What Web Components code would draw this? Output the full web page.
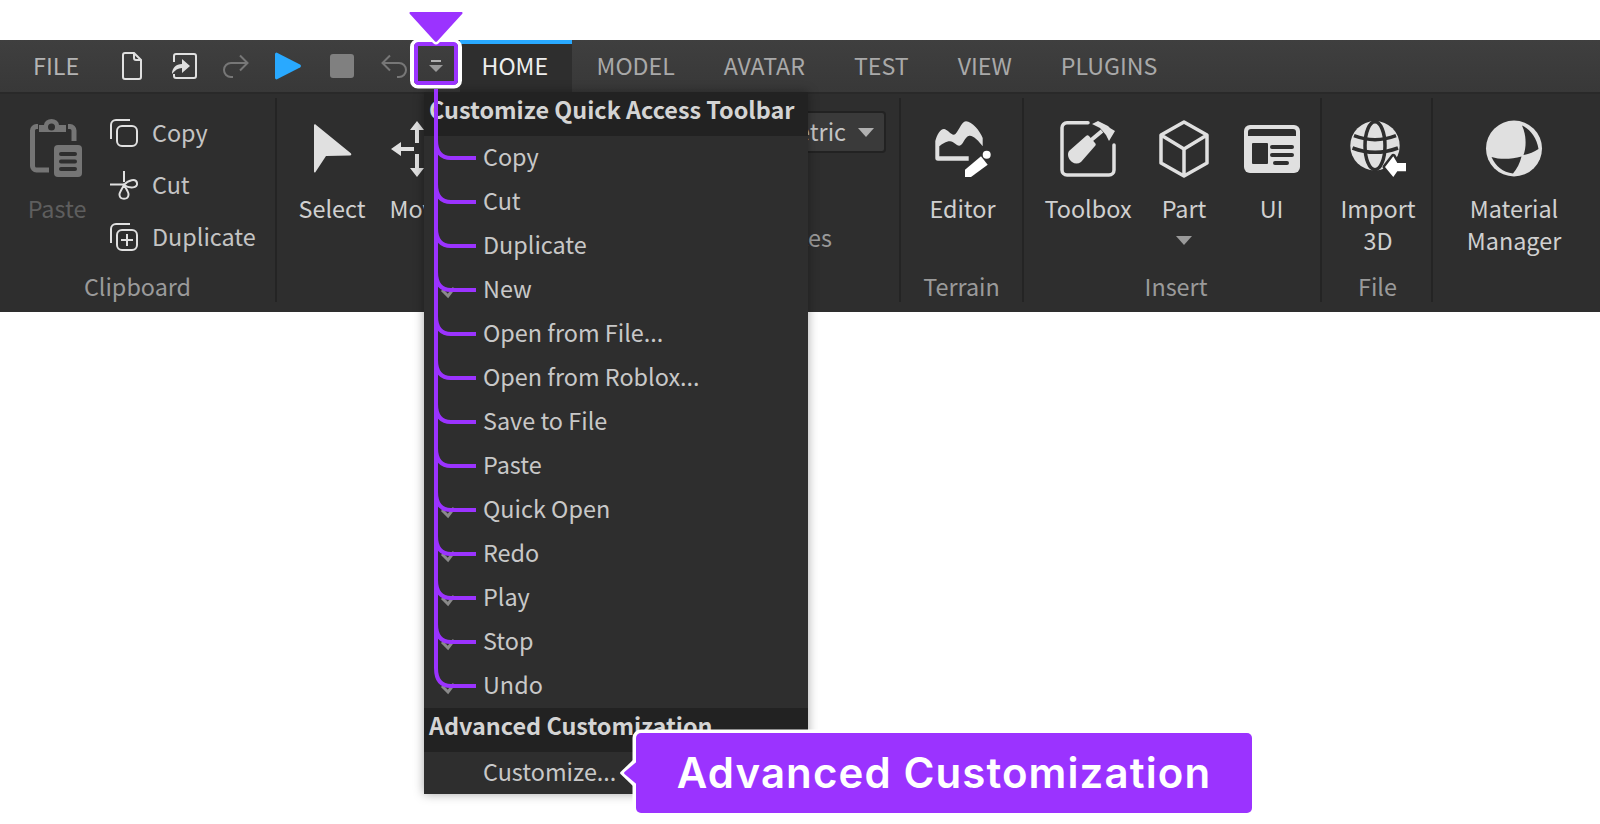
<!DOCTYPE html>
<html>
<head>
<meta charset="utf-8">
<title>Customize Quick Access Toolbar</title>
<style>
  html, body { margin: 0; background: #fff; }
  body { font-family: "Noto Sans CJK SC", "Noto Sans", sans-serif; }
</style>
</head>
<body>
<rs-app></rs-app>

<script>
// icon drawings, coordinates are the size of the box they sit in
const ICONS = {
  doc: [20, 28, `<path d="M3 1h9l7 7v17a2 2 0 0 1-2 2H3a2 2 0 0 1-2-2V3a2 2 0 0 1 2-2z" fill="none" stroke="#e0e0e0" stroke-width="2"/><path d="M12 1v5a2 2 0 0 0 2 2h5" fill="none" stroke="#e0e0e0" stroke-width="2"/>`],
  open: [26, 26, `<path d="M3 9V3a2 2 0 0 1 2-2h18a2 2 0 0 1 2 2v20a2 2 0 0 1-2 2H5a2 2 0 0 1-2-2v-2" fill="none" stroke="#e0e0e0" stroke-width="2"/><path d="M1 21c0-6 4-10 10-10V6l8 7-8 7v-5c-4 0-7 2-10 6z" fill="#e0e0e0"/>`],
  redo: [26, 24, `<path d="M24 9H8a6.500 6.500 0 0 0 0 14h2M17 1.500 24.500 9 17 16.500" fill="none" stroke="#777" stroke-width="2"/>`],
  undo: [26, 24, `<path d="M2 9h16a6.500 6.500 0 0 1 0 14h-2M9 1.500 1.500 9 9 16.500" fill="none" stroke="#777" stroke-width="2"/>`],
  play: [28, 30, `<path d="M2.500 1.500 26 13.500a1.700 1.700 0 0 1 0 3L2.500 28.500A1.600 1.600 0 0 1 1 27V3a1.600 1.600 0 0 1 1.500-1.500z" fill="#29a9ff"/>`],
  stop: [24, 24, `<rect width="24" height="24" rx="3" fill="#808080"/>`],
  drop: [14, 12, `<path d="M2 0h10v2H2z" fill="#b0b0b0"/><path d="M0 5h14l-7 7z" fill="#999"/>`],
  paste: [54, 56, `<path d="M8 5.500H6.500a4 4 0 0 0-4 4V45a4 4 0 0 0 4 4H19M38 5.500h2a4 4 0 0 1 4 4V20" fill="none" stroke="#757575" stroke-width="5"/><path d="M9 11V4h5a7.500 6 0 0 1 15 0h7v7z" fill="#757575"/><circle cx="21.500" cy="6" r="3.500" fill="#2e2e2e"/><rect x="24" y="24" width="28" height="32" rx="4" fill="#757575"/><path d="M31 33h14M31 40.500h14M31 48h14" stroke="#2e2e2e" stroke-width="4" stroke-linecap="round"/>`],
  copy: [28, 28, `<rect x="7" y="7" width="20" height="20" rx="5" fill="none" stroke="#e0e0e0" stroke-width="2"/><path d="M1 20V6a5 5 0 0 1 5-5h14" fill="none" stroke="#e0e0e0" stroke-width="2"/>`],
  cut: [28, 28, `<path d="M14 0v11M0 13.500h14" fill="none" stroke="#e0e0e0" stroke-width="2"/><path d="M14 14C18 9 26 7 27 12 28 17 20 18 14 14z" fill="none" stroke="#e0e0e0" stroke-width="2"/><path d="M14 14C12 18 9 22 9.500 24 10 29 18 29 18.500 24 19 21 16 18 14 14z" fill="none" stroke="#e0e0e0" stroke-width="2"/>`],
  dup: [28, 28, `<rect x="7" y="7" width="20" height="20" rx="5" fill="none" stroke="#e0e0e0" stroke-width="2"/><path d="M1 20V6a5 5 0 0 1 5-5h14" fill="none" stroke="#e0e0e0" stroke-width="2"/><path d="M17 11v12M11 17h12" stroke="#e0e0e0" stroke-width="2"/>`],
  select: [40, 50, `<path d="M2 1.500c0-1 1-1.500 1.800-.8l35 28.500c1 .8.500 2.300-.8 2.300L14 32 3.500 48c-.6.900-1.500.5-1.500-.5z" fill="#e0e0e0"/>`],
  move: [56, 56, `<path d="M26 0l7 9h-5v13h-4V9h-5zM26 56l-7-9h5V33h4v14h5zM0 28l10-7v5h13v4H10v5z" fill="#e0e0e0"/>`],
  editor: [58, 57, `<path d="M1.300 20C3 14 6 8 10 8 13 8 17 14 20 13.700 24 13 27 .3 32 .3 38 .3 46 10 48.700 17V25.300C45 20 39 14 35.300 14.700 31 15 29 24.700 25.300 24.700 22 24.700 20 20.300 16 20.300 12 20.300 8 23 5.300 25.300V35.300H34.700V39.700H4A2.700 2.700 0 0 1 1.300 37z" fill="#e0e0e0"/><path d="M31 56v-7.300L47 35.300 53.700 43.700 37 56z" fill="#fff"/><circle cx="52.700" cy="33.800" r="4" fill="#fff"/>`],
  toolbox: [56, 56, `<path d="M28 1.800H7a5 5 0 0 0-5 5V49a5 5 0 0 0 5 5h42a5 5 0 0 0 5-5V24" fill="none" stroke="#e0e0e0" stroke-width="3.500" stroke-linecap="round"/><path d="M9 30 26 15c1-1 2-1 3 0l6 7c1 1 1 2 0 3L21 41c-3 2-6 2-9 0-4-3-5-8-3-11z" fill="#e0e0e0"/><path d="M30 20l12-10" stroke="#e0e0e0" stroke-width="4"/><path d="M32 3l6-3 10 5 2 2 5 3-6 10-3-6-6-7z" fill="#e0e0e0"/>`],
  part: [50, 58, `<path d="M25 2 48 15v28L25 56 2 43V15zM2 15l23 14 23-14M25 29v27" fill="none" stroke="#e0e0e0" stroke-width="3.500" stroke-linejoin="round"/>`],
  ui: [56, 48, `<rect width="56" height="48" rx="6" fill="#e0e0e0"/><path d="M4 11V7a3 3 0 0 1 3-3h42a3 3 0 0 1 3 3v4z" fill="#2e2e2e"/><rect x="8" y="18" width="16" height="21" rx="1" fill="#2e2e2e"/><path d="M28 22h20M28 30h20M31 38h12" stroke="#2e2e2e" stroke-width="4" stroke-linecap="round"/>`],
  import: [58, 57, `<circle cx="26" cy="24.700" r="24.700" fill="#e0e0e0"/><ellipse cx="26" cy="24.700" rx="10" ry="24" fill="none" stroke="#2e2e2e" stroke-width="3.500"/><path d="M5 14.700Q26 22.700 47 14.700M3.500 27Q26 35.600 49 27" fill="none" stroke="#2e2e2e" stroke-width="3.500"/><path d="M36 46 44.300 35.300 48.300 42H57V50.300H48.300L44.300 56z" fill="#fff" stroke="#2e2e2e" stroke-width="5" paint-order="stroke" stroke-linejoin="round"/>`],
  material: [56, 56, `<circle cx="28" cy="27.500" r="28" fill="#e0e0e0"/><path d="M36 4.500C44 8 51 17 52.500 28 48 31 43 33 37.500 34 40.500 26 40.500 14 36 4.500z" fill="#2e2e2e"/><path d="M5.500 36C15 39 26 38 35.500 35.500 34 42 31 48 27 52.500 17 51.500 9.500 45 5.500 36z" fill="#2e2e2e"/>`],
  check: [16, 12, `<path d="M2 4l6 6 6-8" fill="none" stroke="#8a8a8a" stroke-width="3"/>`],
};

class RsIcon extends HTMLElement {
  connectedCallback() {
    const [w, h, body] = ICONS[this.getAttribute('name')];
    this.attachShadow({ mode: 'open' }).innerHTML = `
      <style>:host { display: block; line-height: 0; } svg { display: block; overflow: visible; }</style>
      <svg width="${w}" height="${h}" viewBox="0 0 ${w} ${h}">${body}</svg>`;
  }
}

// quick access cell in the title bar
class RsQuick extends HTMLElement {
  connectedCallback() {
    this.attachShadow({ mode: 'open' }).innerHTML = `
      <style>
        :host { display: flex; align-items: center; justify-content: center; flex: none; width: 52px; height: 100%; }
      </style>
      <slot></slot>`;
  }
}

class RsTab extends HTMLElement {
  connectedCallback() {
    this.attachShadow({ mode: 'open' }).innerHTML = `
      <style>
        :host {
          display: flex; align-items: center; box-sizing: border-box; height: 52px; padding: 0 24.500px 2px;
          font-size: 23.200px; color: #a9a9a9; white-space: nowrap;
        }
        :host([active]) {
          background: #2e2e2e; color: #eee; border-top: 4px solid #29a9ff; padding: 0 24px 6px 21.500px;
        }
      </style>
      <slot></slot>`;
  }
}

class RsTitlebar extends HTMLElement {
  connectedCallback() {
    this.attachShadow({ mode: 'open' }).innerHTML = `
      <style>
        :host {
          display: flex; align-items: stretch; height: 52px; box-sizing: border-box;
          background: linear-gradient(#3f3f3f, #383838);
          font-size: 23.400px; color: #b4b4b4;
        }
        .file { display: flex; align-items: center; width: 106px; padding: 0 0 2px 33px; box-sizing: border-box; }
        .quick { display: flex; flex: none; width: 354px; }
        .tabs { display: flex; }
      </style>
      <div class="file">FILE</div>
      <div class="quick"><slot name="quick"></slot></div>
      <div class="tabs"><slot></slot></div>`;
  }
}

// one ribbon group: its content, and its caption along the bottom
class RsGroup extends HTMLElement {
  connectedCallback() {
    this.attachShadow({ mode: 'open' }).innerHTML = `
      <style>
        :host {
          display: flex; flex-direction: column; box-sizing: border-box; height: 204px;
          border-right: 2px solid #242424;
        }
        :host([last]) { border-right: 0; }
        .body { flex: 1; display: flex; min-height: 0; }
        .cap { height: 28px; line-height: 24px; text-align: center; font-size: 23.400px; color: #9a9a9a; }
      </style>
      <div class="body"><slot></slot></div>
      <div class="cap"><slot name="cap"></slot></div>`;
  }
}

class RsButton extends HTMLElement {
  connectedCallback() {
    this.attachShadow({ mode: 'open' }).innerHTML = `
      <style>
        :host {
          display: flex; flex-direction: column; align-items: center; flex: none;
          padding-top: 22px; box-sizing: border-box;
          font-size: 23.400px; line-height: 32px; color: #d0d0d0; text-align: center;
        }
        :host([dim]) { color: #5e5e5e; }
        .ic { height: 58px; display: flex; align-items: center; justify-content: center; margin-bottom: 14px; }
      </style>
      <div class="ic"><slot name="icon"></slot></div>
      <slot></slot>`;
  }
}

class RsRow extends HTMLElement {
  connectedCallback() {
    this.attachShadow({ mode: 'open' }).innerHTML = `
      <style>
        :host {
          display: flex; align-items: center; gap: 14px; height: 52px;
          font-size: 23.400px; color: #c4c4c4;
        }
        span { padding-bottom: 2px; }
      </style>
      <slot name="icon"></slot><span><slot></slot></span>`;
  }
}

class RsRibbon extends HTMLElement {
  connectedCallback() {
    this.attachShadow({ mode: 'open' }).innerHTML = `
      <style>
        :host {
          display: flex; box-sizing: border-box; height: 220px; padding: 4px 0 10px;
          background: #2e2e2e; border-top: 2px solid #292929;
        }
      </style>
      <slot></slot>`;
  }
}

class RsDropdown extends HTMLElement {
  connectedCallback() {
    this.attachShadow({ mode: 'open' }).innerHTML = `
      <style>
        :host {
          display: flex; align-items: center; justify-content: flex-end; gap: 12px; box-sizing: border-box;
          width: 200px; height: 42px; padding-right: 10px;
          background: #3a3a3a; border: 2px solid #222; border-radius: 4px;
          font-size: 23.400px; color: #c4c4c4;
        }
        span { padding-bottom: 3px; }
        i { border: 8px solid transparent; border-top: 9px solid #b0b0b0; border-bottom: 0; }
      </style>
      <span><slot></slot></span><i></i>`;
  }
}

// the dropdown laid over the ribbon
class RsMenu extends HTMLElement {
  connectedCallback() {
    this.attachShadow({ mode: 'open' }).innerHTML = `
      <style>
        :host {
          position: absolute; left: 424px; top: 92px; width: 384px; height: 702px;
          display: flex; flex-direction: column;
          background: #2e2e2e; box-shadow: 0 0 10px rgba(0,0,0,.35);
        }
      </style>
      <slot></slot>`;
  }
}

class RsMenuHead extends HTMLElement {
  connectedCallback() {
    this.attachShadow({ mode: 'open' }).innerHTML = `
      <style>
        :host {
          display: flex; align-items: center; flex: none; box-sizing: border-box; height: 44px; padding: 0 0 10px 5px;
          background: #222; color: #d4d4d4; font-size: 23.400px; font-weight: 700; white-space: nowrap;
        }
      </style>
      <slot></slot>`;
  }
}

class RsMenuItem extends HTMLElement {
  connectedCallback() {
    const tick = this.hasAttribute('checked') ? '<rs-icon name="check"></rs-icon>' : '';
    this.attachShadow({ mode: 'open' }).innerHTML = `
      <style>
        :host {
          display: flex; align-items: center; flex: none; height: 44px;
          font-size: 23.400px; color: #c8c8c8; white-space: nowrap;
        }
        .mark { flex: none; width: 59px; box-sizing: border-box; padding: 4px 0 0 16px; }
        span { padding-bottom: 4px; }
      </style>
      <div class="mark">${tick}</div>
      <span><slot></slot></span>`;
  }
}

// purple bracket running from the highlighted button down the menu
class RsGuide extends HTMLElement {
  connectedCallback() {
    let d = '';
    for (let i = 0; i < 13; i++) {
      const y = 69 + i * 44;
      d += `M2 ${y - 18}C2 ${y - 6} 7 ${y} 17 ${y}H42`;
    }
    this.attachShadow({ mode: 'open' }).innerHTML = `
      <style>
        :host { position: absolute; left: 434px; top: 89px; width: 43px; height: 600px; }
        svg { display: block; overflow: visible; }
      </style>
      <svg width="43" height="600" viewBox="0 0 43 600" fill="none" stroke="#9b33ff" stroke-width="4">
        <path d="M2 0V579"/><path d="${d}"/>
      </svg>`;
  }
}

// white edged marker on the dropdown button, arrow above it
class RsMarker extends HTMLElement {
  connectedCallback() {
    this.attachShadow({ mode: 'open' }).innerHTML = `
      <style>
        :host { position: absolute; left: 405px; top: 8px; width: 62px; height: 84px; }
        svg { display: block; overflow: visible; }
      </style>
      <svg width="62" height="84" viewBox="0 0 62 84">
        <rect x="7" y="33" width="48" height="45.500" rx="6" fill="none" stroke="#fff" stroke-width="4"/>
        <rect x="11" y="36" width="40" height="39" rx="2.500" fill="none" stroke="#9b33ff" stroke-width="4"/>
        <path d="M5.500 4h51a1 1 0 0 1 .8 1.700L32 33.500a1.500 1.500 0 0 1-2 0L4.700 5.700A1 1 0 0 1 5.500 4z" fill="#9b33ff" stroke="#fff" stroke-width="5" paint-order="stroke"/>
      </svg>`;
  }
}

class RsCallout extends HTMLElement {
  connectedCallback() {
    this.attachShadow({ mode: 'open' }).innerHTML = `
      <style>
        :host {
          position: absolute; left: 636px; top: 733px; width: 616px; height: 80px;
          display: flex; align-items: center; justify-content: center; box-sizing: border-box; padding-bottom: 2px;
          background: #9b33ff; border-radius: 5px; box-shadow: 0 0 0 3.500px #fff;
          color: #fff; font-family: Inter, "Liberation Sans", sans-serif; font-size: 42px; font-weight: 600;
          letter-spacing: 1.100px; white-space: nowrap;
        }
        svg { position: absolute; left: -17px; top: 24px; overflow: visible; }
      </style>
      <svg width="18" height="32" viewBox="0 0 18 32">
        <path d="M14 3 1.500 15a1.500 1.500 0 0 0 0 2L14 29z" fill="#fff"/>
        <path d="M18 4.500 5.500 15a1.500 1.500 0 0 0 0 2L18 27.500z" fill="#9b33ff"/>
      </svg>
      <slot></slot>`;
  }
}

class RsApp extends HTMLElement {
  connectedCallback() {
    this.attachShadow({ mode: 'open' }).innerHTML = `
      <style>
        :host {
          display: block; position: relative; box-sizing: border-box; width: 1600px; height: 824px;
          padding-top: 40px; overflow: hidden; background: #fff;
          font-family: "Noto Sans CJK SC", "Noto Sans", sans-serif;
        }
        .rows { padding-top: 9px; margin-left: 3px; }
        .right { margin-left: auto; padding: 13px 13px 0 0; display: flex; flex-direction: column; align-items: flex-end; }
        .surf { margin-top: 68px; font-size: 23.400px; color: #9a9a9a; line-height: 32px; padding-right: 54px; }
      </style>
      <rs-titlebar>
        <rs-quick slot="quick"><rs-icon name="doc"></rs-icon></rs-quick>
        <rs-quick slot="quick"><rs-icon name="open"></rs-icon></rs-quick>
        <rs-quick slot="quick"><rs-icon name="redo"></rs-icon></rs-quick>
        <rs-quick slot="quick"><rs-icon name="play"></rs-icon></rs-quick>
        <rs-quick slot="quick" style="margin-left:2px"><rs-icon name="stop"></rs-icon></rs-quick>
        <rs-quick slot="quick"><rs-icon name="undo"></rs-icon></rs-quick>
        <rs-quick slot="quick" style="width:32px"><rs-icon name="drop"></rs-icon></rs-quick>
        <rs-tab active>HOME</rs-tab>
        <rs-tab>MODEL</rs-tab>
        <rs-tab>AVATAR</rs-tab>
        <rs-tab>TEST</rs-tab>
        <rs-tab>VIEW</rs-tab>
        <rs-tab>PLUGINS</rs-tab>
      </rs-titlebar>
      <rs-ribbon>
        <rs-group style="width:277px">
          <rs-button dim style="width:100px;margin-left:7px"><rs-icon slot="icon" name="paste"></rs-icon>Paste</rs-button>
          <div class="rows">
            <rs-row><rs-icon slot="icon" name="copy"></rs-icon>Copy</rs-row>
            <rs-row><rs-icon slot="icon" name="cut"></rs-icon>Cut</rs-row>
            <rs-row><rs-icon slot="icon" name="dup"></rs-icon>Duplicate</rs-row>
          </div>
          <span slot="cap">Clipboard</span>
        </rs-group>
        <rs-group style="width:624px">
          <rs-button style="width:100px;margin-left:5px"><rs-icon slot="icon" name="select"></rs-icon>Select</rs-button>
          <rs-button style="width:73px"><rs-icon slot="icon" name="move"></rs-icon>Move</rs-button>
          <div class="right">
            <rs-dropdown>Geometric</rs-dropdown>
            <div class="surf">Join Surfaces</div>
          </div>
        </rs-group>
        <rs-group style="width:123px">
          <rs-button style="width:123px"><rs-icon slot="icon" name="editor"></rs-icon>Editor</rs-button>
          <span slot="cap">Terrain</span>
        </rs-group>
        <rs-group style="width:298px">
          <rs-button style="width:94px;margin-left:17px"><rs-icon slot="icon" name="toolbox"></rs-icon>Toolbox</rs-button>
          <rs-button style="width:98px"><rs-icon slot="icon" name="part"></rs-icon>Part<svg width="16" height="9" viewBox="0 0 16 9" style="margin-top:12px"><path d="M0 0h16L8 9z" fill="#9a9a9a"/></svg></rs-button>
          <rs-button style="width:77px"><rs-icon slot="icon" name="ui"></rs-icon>UI</rs-button>
          <span slot="cap" style="padding-left:8px">Insert</span>
        </rs-group>
        <rs-group style="width:111px">
          <rs-button style="width:110px;margin-left:1px"><rs-icon slot="icon" name="import"></rs-icon>Import<br>3D</rs-button>
          <span slot="cap" style="padding-left:2px">File</span>
        </rs-group>
        <rs-group last style="width:167px">
          <rs-button style="width:162px"><rs-icon slot="icon" name="material"></rs-icon>Material<br>Manager</rs-button>
        </rs-group>
      </rs-ribbon>
      <rs-menu>
        <rs-menu-head>Customize Quick Access Toolbar</rs-menu-head>
        <rs-menu-item>Copy</rs-menu-item>
        <rs-menu-item>Cut</rs-menu-item>
        <rs-menu-item>Duplicate</rs-menu-item>
        <rs-menu-item checked>New</rs-menu-item>
        <rs-menu-item>Open from File...</rs-menu-item>
        <rs-menu-item>Open from Roblox...</rs-menu-item>
        <rs-menu-item>Save to File</rs-menu-item>
        <rs-menu-item>Paste</rs-menu-item>
        <rs-menu-item checked>Quick Open</rs-menu-item>
        <rs-menu-item checked>Redo</rs-menu-item>
        <rs-menu-item checked>Play</rs-menu-item>
        <rs-menu-item checked>Stop</rs-menu-item>
        <rs-menu-item checked>Undo</rs-menu-item>
        <rs-menu-head>Advanced Customization</rs-menu-head>
        <rs-menu-item style="height:42px">Customize...</rs-menu-item>
      </rs-menu>
      <rs-guide></rs-guide>
      <rs-marker></rs-marker>
      <rs-callout>Advanced Customization</rs-callout>`;
  }
}

customElements.define('rs-icon', RsIcon);
customElements.define('rs-quick', RsQuick);
customElements.define('rs-tab', RsTab);
customElements.define('rs-titlebar', RsTitlebar);
customElements.define('rs-group', RsGroup);
customElements.define('rs-button', RsButton);
customElements.define('rs-row', RsRow);
customElements.define('rs-ribbon', RsRibbon);
customElements.define('rs-dropdown', RsDropdown);
customElements.define('rs-menu', RsMenu);
customElements.define('rs-menu-head', RsMenuHead);
customElements.define('rs-menu-item', RsMenuItem);
customElements.define('rs-guide', RsGuide);
customElements.define('rs-marker', RsMarker);
customElements.define('rs-callout', RsCallout);
customElements.define('rs-app', RsApp);
</script>
</body>
</html>
